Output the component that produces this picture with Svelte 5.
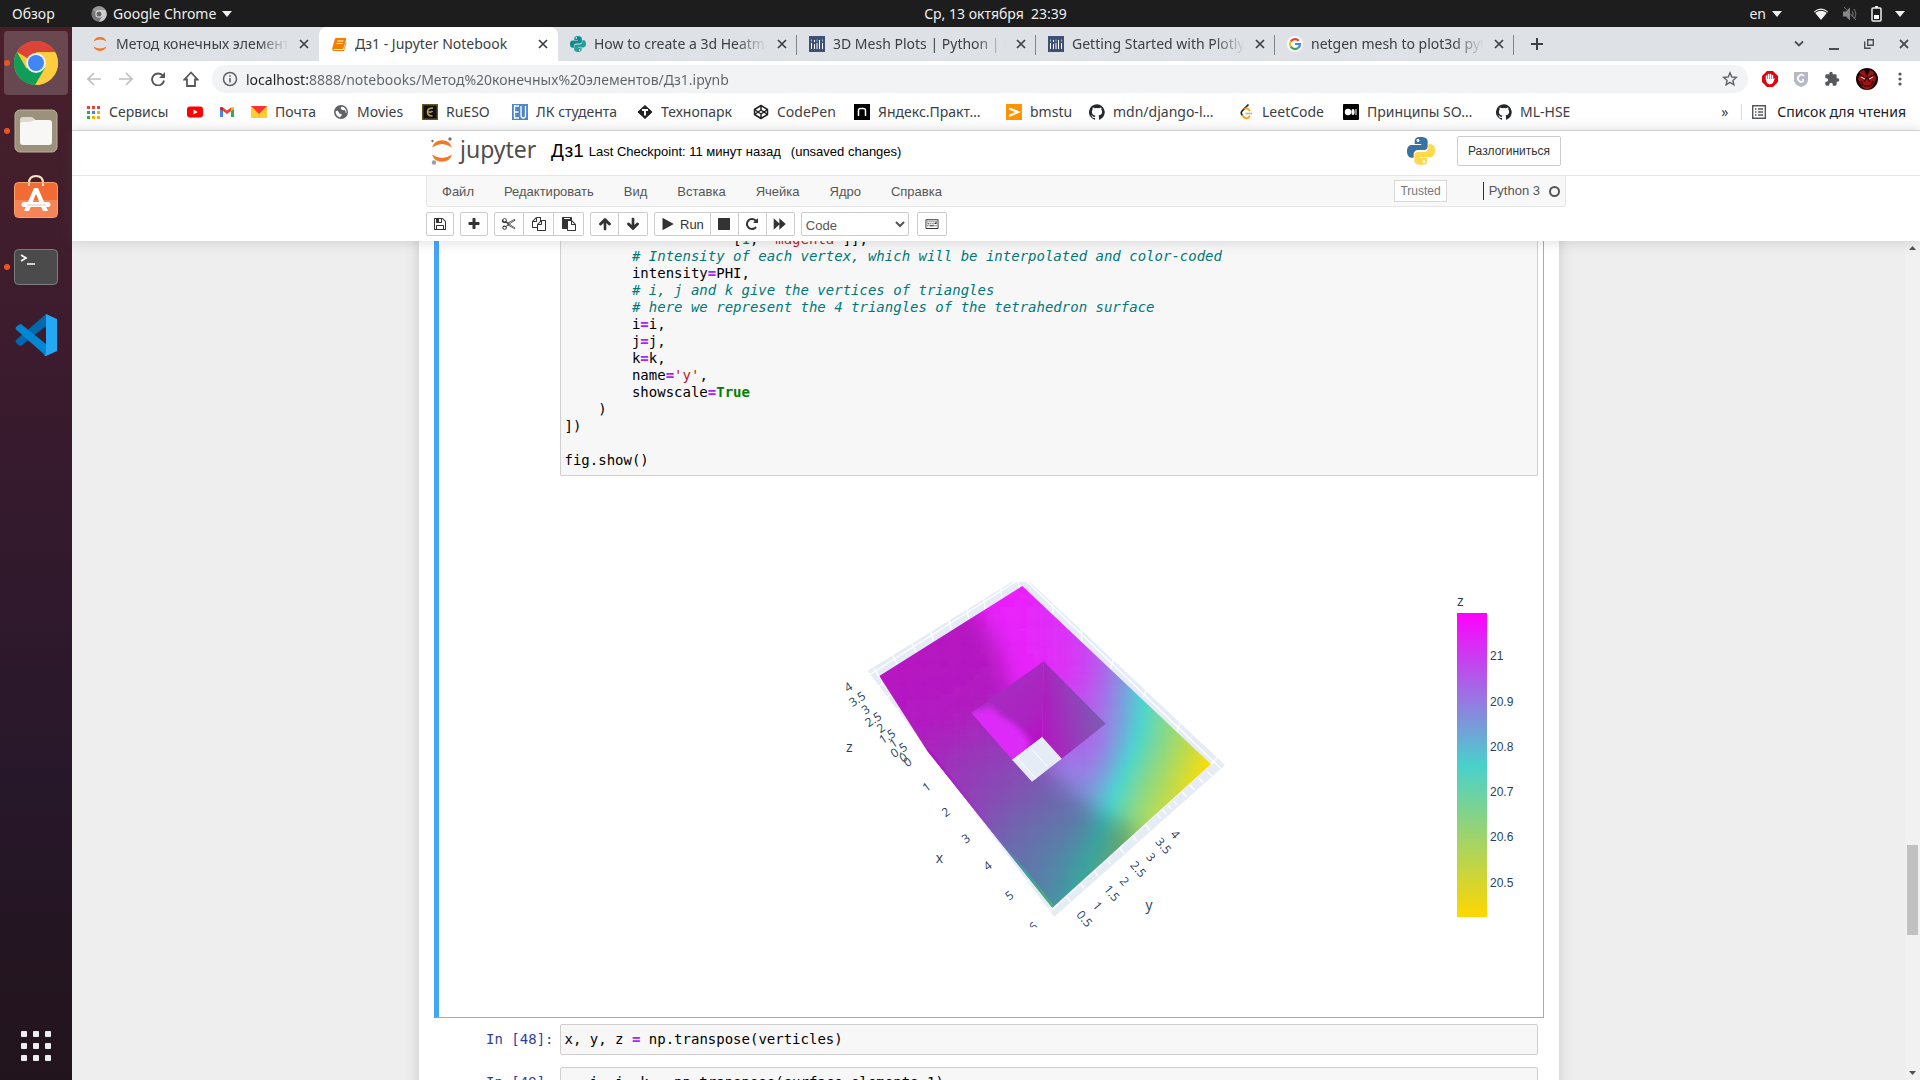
<script>
  const tabs = [
    { icon: 'jupyter', title: 'Метод конечных элементов' },
    { icon: 'book', title: 'Дз1 - Jupyter Notebook', active: true },
    { icon: 'pyteal', title: 'How to create a 3d Heatmap' },
    { icon: 'plotly', title: '3D Mesh Plots | Python | Plotly' },
    { icon: 'plotly', title: 'Getting Started with Plotly in' },
    { icon: 'google', title: 'netgen mesh to plot3d python' },
  ];

  const bookmarks = [
    { icon: 'apps', label: 'Сервисы' },
    { icon: 'youtube', label: '' },
    { icon: 'gmail', label: '' },
    { icon: 'mail', label: 'Почта' },
    { icon: 'globe', label: 'Movies' },
    { icon: 'rueso', label: 'RuESO' },
    { icon: 'eu', label: 'ЛК студента' },
    { icon: 'techno', label: 'Технопарк' },
    { icon: 'codepen', label: 'CodePen' },
    { icon: 'yandex', label: 'Яндекс.Практ…' },
    { icon: 'bmstu', label: 'bmstu' },
    { icon: 'github', label: 'mdn/django-l…' },
    { icon: 'leetcode', label: 'LeetCode' },
    { icon: 'medium', label: 'Принципы SO…' },
    { icon: 'github', label: 'ML-HSE' },
  ];

  const menus = ['Файл', 'Редактировать', 'Вид', 'Вставка', 'Ячейка', 'Ядро', 'Справка'];

  const fa = {
    save: 'M512 1536h768v-384h-768v384zm896 0h128v-896q0-14-10-38.5t-20-34.5l-281-281q-10-10-34-20t-39-10v416q0 40-28 68t-68 28h-576q-40 0-68-28t-28-68v-416h-128v1280h128v-416q0-40 28-68t68-28h832q40 0 68 28t28 68v416zm-384-928v-320q0-13-9.5-22.5t-22.5-9.5h-192q-13 0-22.5 9.5t-9.5 22.5v320q0 13 9.5 22.5t22.5 9.5h192q13 0 22.5-9.5t9.5-22.5zm640 32v928q0 40-28 68t-68 28h-1344q-40 0-68-28t-28-68v-1344q0-40 28-68t68-28h928q40 0 88 20t76 48l280 280q28 28 48 76t20 88z',
    plus: 'M1600 736v192q0 40-28 68t-68 28h-416v416q0 40-28 68t-68 28h-192q-40 0-68-28t-28-68v-416h-416q-40 0-68-28t-28-68v-192q0-40 28-68t68-28h416v-416q0-40 28-68t68-28h192q40 0 68 28t28 68v416h416q40 0 68 28t28 68z',
    cut: 'M330 150a290 270 0 0 1 290 270q0 90-50 150l210 140 740-410q50-25 100 0l100 50q30 25 0 50L1010 896l710 496q30 25 0 50l-100 50q-50 25-100 0l-740-410-210 140q50 60 50 150a290 270 0 1 1-290-270q110 0 180 50l180-120v-180l-180-120q-70 50-180 50a290 270 0 1 1 0-632zm0 120a160 140 0 1 0 0 290 160 140 0 0 0 0-290zm0 970a160 140 0 1 0 0 290 160 140 0 0 0 0-290zM830 800l90 60 670-480-40-20zM830 990l720 440 40-20-640-460z',
    copy: 'M1696 384q40 0 68 28t28 68v1216q0 40-28 68t-68 28h-960q-40 0-68-28t-28-68v-288h-544q-40 0-68-28t-28-68v-672q0-40 20-88t48-76l408-408q28-28 76-48t88-20h416q40 0 68 28t28 68v328q68-40 128-40h416zm-544 213l-299 299h299v-299zm-640-384l-299 299h299v-299zm196 647l316-316v-416h-384v416q0 40-28 68t-68 28h-416v640h512v-256q0-40 20-88t48-76zm956 804v-1152h-384v416q0 40-28 68t-68 28h-416v640h896z',
    paste: 'M768 1664h896v-640h-416q-40 0-68-28t-28-68v-416h-384v1152zm256-1440v-64q0-13-9.5-22.5t-22.5-9.5h-704q-13 0-22.5 9.5t-9.5 22.5v64q0 13 9.5 22.5t22.5 9.5h704q13 0 22.5-9.5t9.5-22.5zm256 672h299l-299-299v299zm512 128v672q0 40-28 68t-68 28h-960q-40 0-68-28t-28-68v-160h-544q-40 0-68-28t-28-68v-1344q0-40 28-68t68-28h1088q40 0 68 28t28 68v328q21 13 36 28l408 408q28 28 48 76t20 88z',
    up: 'M896 130q50 0 90 38l640 640q38 40 38 90t-38 90l-75 76q-40 37-91 37-52 0-90-37l-304-304v824q0 50-38 78t-88 28h-88q-50 0-88-28t-38-78v-824l-304 304q-38 37-90 37t-90-37l-75-76q-38-38-38-90 0-50 38-90l640-640q38-38 90-38z',
    down: 'M896 1662q50 0 90-38l640-640q38-40 38-90t-38-90l-75-76q-40-37-91-37-52 0-90 37l-304 304v-824q0-50-38-78t-88-28h-88q-50 0-88 28t-38 78v824l-304-304q-38-37-90-37t-90 37l-75 76q-38 38-38 90 0 50 38 90l640 640q38 38 90 38z',
    run: 'M1576 927l-1328 738q-23 13-39.500 3t-16.500-36v-1472q0-26 16.500-36t39.500 3l1328 738q23 13 23 31t-23 31z',
    stop: 'M1664 192v1408q0 26-19 45t-45 19h-1408q-26 0-45-19t-19-45v-1408q0-26 19-45t45-19h1408q26 0 45 19t19 45z',
    repeat: 'M1664 256v448q0 26-19 45t-45 19h-448q-42 0-59-40-17-39 14-69l138-138q-148-137-349-137-104 0-198.500 40.500t-163.500 109.500-109.500 163.500-40.500 198.500 40.500 198.500 109.500 163.500 163.500 109.500 198.500 40.500q119 0 225-52t179-147q7-10 23-12 15 0 25 9l137 138q9 8 9.500 20.500t-7.500 22.500q-109 132-264 204.500t-327 72.500q-156 0-298-61t-245-164-164-245-61-298 61-298 164-245 245-164 298-61q147 0 284.500 55.500t244.500 156.500l130-129q29-31 70-14 39 17 39 59z',
    forward: 'M90 150l720 690v-690l820 746-820 746v-690l-720 690z',
    keyboard: 'M60 380q0-100 100-100h1472q100 0 100 100v1040q0 100-100 100h-1472q-100 0-100-100zm120 20v1000h1432v-1000zM300 530h130v130h-130zM560 530h130v130h-130zM820 530h130v130h-130zM1080 530h130v130h-130zM1340 530h150v380h-280v-130h130zM300 790h260v130h-260zM690 790h130v130h-130zM950 790h130v130h-130zM300 1060h130v130h-130zM560 1060h650v130h-650zM1340 1060h150v130h-150z',
  };

  const toolGroups = [
    { kind: 'narrow', buttons: [['save', 'Сохранить']] },
    { kind: 'narrow', buttons: [['plus', 'Вставить ячейку']] },
    { kind: 'wide', buttons: [['cut', 'Вырезать'], ['copy', 'Копировать'], ['paste', 'Вставить']] },
    { kind: 'medium', buttons: [['up', 'Вверх'], ['down', 'Вниз']] },
    { kind: 'narrow', buttons: [['run', 'Run'], ['stop', 'Стоп'], ['repeat', 'Перезапуск'], ['forward', 'Выполнить все']] },
  ];

  // Potential on the mesh surface: [x, y, value], 0 = magenta, 1 = turquoise, 2 = gold
  const samples = [
    [667, 78, 0.08], [600, 180, 0.1], [750, 230, 0.15], [850, 280, 0.25], [900, 380, 0.42],
    [950, 385, 0.62], [1000, 400, 0.86], [1037, 425, 1.02], [1090, 480, 1.3], [1150, 530, 1.55],
    [1233, 613, 2], [1020, 500, 1], [985, 600, 1], [945, 700, 1], [885, 850, 1], [835, 975, 1],
    [900, 560, 0.55], [880, 640, 0.62], [800, 600, 0.5], [780, 650, 0.56], [240, 350, 0.06],
    [400, 260, 0.07], [450, 500, 0.13], [400, 600, 0.2], [500, 560, 0.24], [600, 600, 0.34],
    [640, 680, 0.45], [500, 680, 0.33], [560, 760, 0.43], [700, 700, 0.52], [700, 800, 0.63],
    [620, 830, 0.58], [750, 900, 0.76], [700, 930, 0.72], [850, 780, 0.78], [1020, 700, 1.34],
    [1100, 700, 1.62], [1160, 650, 1.78], [1000, 800, 1.4], [910, 890, 1.14], [757, 1030, 0.86],
    [1060, 580, 1.28], [700, 400, 0.14], [550, 350, 0.09], [800, 420, 0.26],
  ];

  const kernel = (d2) => (d2 === 0 ? 0 : d2 * Math.log(d2));

  // Thin-plate spline through the samples
  function fitSpline(pts) {
    const n = pts.length;
    const size = n + 3;
    const m = Array.from({ length: size }, () => new Array(size + 1).fill(0));
    for (let i = 0; i < n; i++) {
      const [xi, yi, v] = pts[i];
      for (let j = 0; j < n; j++) {
        const dx = (xi - pts[j][0]) / 500;
        const dy = (yi - pts[j][1]) / 500;
        m[i][j] = kernel(dx * dx + dy * dy) + (i === j ? 0.004 : 0);
      }
      const basis = [1, xi / 500, yi / 500];
      basis.forEach((b, k) => {
        m[i][n + k] = b;
        m[n + k][i] = b;
      });
      m[i][size] = v;
    }
    for (let c = 0; c < size; c++) {
      let p = c;
      for (let r = c + 1; r < size; r++) if (Math.abs(m[r][c]) > Math.abs(m[p][c])) p = r;
      [m[c], m[p]] = [m[p], m[c]];
      for (let r = 0; r < size; r++) {
        if (r === c) continue;
        const f = m[r][c] / m[c][c];
        for (let k = c; k <= size; k++) m[r][k] -= f * m[c][k];
      }
    }
    const w = m.map((row, i) => row[size] / row[i]);
    return (x, y) => {
      let s = w[n] + (w[n + 1] * x) / 500 + (w[n + 2] * y) / 500;
      for (let j = 0; j < n; j++) {
        const dx = (x - pts[j][0]) / 500;
        const dy = (y - pts[j][1]) / 500;
        s += w[j] * kernel(dx * dx + dy * dy);
      }
      return s;
    };
  }

  const scale = [[250, 14, 255], [72, 214, 208], [255, 221, 0]];
  function colour(t) {
    const v = Math.max(0, Math.min(1.999, t));
    const a = scale[Math.floor(v)];
    const b = scale[Math.floor(v) + 1];
    const f = v % 1;
    return `rgb(${a.map((c, i) => Math.round(c + (b[i] - c) * f)).join(',')})`;
  }

  const field = fitSpline(samples);
  const step = 20;
  const patches = [];
  for (let y = 20; y < 1110; y += step) {
    for (let x = 180; x < 1300; x += step) {
      if (x + y < 480 || x - y > 800 || x + y > 1980 || y - x > 420) continue;
      patches.push({ x, y, fill: colour(field(x + step / 2, y + step / 2)) });
    }
  }

  const zTicks = [['4', 145, 382], ['3.5', 172, 418], ['3', 197, 449], ['2.5', 220, 479], ['2', 243, 505], ['1.5', 262, 530], ['1', 280, 550], ['0.5', 297, 571], ['0', 310, 593], ['0', 323, 607]];
  const xTicks = [['1', 380, 682], ['2', 438, 757], ['3', 498, 836], ['4', 563, 918], ['5', 628, 1007], ['6', 700, 1100]];
  const yTicks = [['4', 1125, 824], ['3.5', 1090, 858], ['3', 1052, 892], ['2.5', 1014, 928], ['2', 973, 964], ['1.5', 935, 1000], ['1', 892, 1038], ['0.5', 853, 1077]];
  const barTicks = [['21', 656], ['20.9', 702], ['20.8', 747], ['20.7', 792], ['20.6', 837], ['20.5', 883]];
  const gridLines = [
    'M212 342L652 62', 'M222 326L262 388', 'M275 280L292 314', 'M335 250L350 280', 'M391 213L401 243', 'M446 178L454 210', 'M499 145L507 178', 'M551 112L555 148', 'M601 80L606 116', 'M652 60L660 90',
    'M676 60L1262 625', 'M757 132L760 165', 'M845 210L845 245', 'M940 296L932 325', 'M1038 392L1030 410', 'M1140 490L1130 515', 'M1252 592L1232 615',
    'M745 1060L1245 600', 'M797 1005L812 1026', 'M838 966L853 986', 'M880 928L893 948', 'M918 895L932 912', 'M958 862L972 880', 'M998 824L1010 844', 'M1035 790L1050 812', 'M1072 764L1083 776', 'M1088 750L1099 762', 'M1104 736L1115 748', 'M1120 722L1131 734', 'M1146 696L1160 710', 'M1170 675L1184 690', 'M1196 655L1210 668', 'M1222 635L1236 648',
    'M236 380L250 368', 'M262 412L276 402', 'M290 450L304 440', 'M318 492L334 480', 'M350 540L366 530', 'M380 576L394 566', 'M425 648L440 636', 'M484 722L498 710', 'M545 800L558 788', 'M608 882L622 872', 'M675 968L690 956',
    'M740 1052L756 1040',
  ];
</script>

{#snippet gh()}
  <path d="M8 .2a8 8 0 0 0-2.500 15.600c.4.1.5-.2.5-.4v-1.500c-2.200.5-2.700-1-2.700-1-.4-.9-.9-1.200-.9-1.200-.7-.5.1-.5.1-.5.8.1 1.200.8 1.200.8.7 1.300 1.900.9 2.300.7.1-.5.3-.9.5-1.100-1.800-.2-3.600-.9-3.600-4 0-.9.3-1.600.8-2.100-.1-.2-.4-1 .1-2.100 0 0 .7-.2 2.200.8a7.500 7.500 0 0 1 4 0c1.500-1 2.200-.8 2.200-.8.4 1.100.2 1.900.1 2.100.5.6.8 1.300.8 2.100 0 3.100-1.900 3.700-3.600 3.900.3.300.5.8.5 1.500v2.300c0 .2.1.5.5.4A8 8 0 0 0 8 .2z" fill="#24292e" />
{/snippet}

{#snippet snakes(a, b)}
  <path d="M7.900 0C5 0 4.400 1.200 4.400 2.400V4h3.700v.6H2.600C1 4.600 0 6 0 8.200s1 3.600 2.300 3.600h1.500V9.900c0-1.500 1.100-2.500 2.500-2.500h3.500c1.300 0 2-.9 2-2V2.400C11.800 1 10.500 0 7.900 0zM6 1.200a.8.8 0 1 1 0 1.500.8.8 0 0 1 0-1.500z" fill={a} />
  <path d="M8.100 16c2.900 0 3.500-1.200 3.500-2.400V12H7.900v-.6h5.500c1.600 0 2.600-1.400 2.600-3.600s-1-3.600-2.300-3.600h-1.500v1.900c0 1.500-1.100 2.500-2.500 2.500H6.200c-1.300 0-2 .9-2 2v3C4.200 15 5.500 16 8.100 16zM10 14.800a.8.800 0 1 1 0-1.500.8.8 0 0 1 0 1.500z" fill={b} />
{/snippet}

{#snippet icon(name)}
  <svg class="icon" viewBox="0 0 16 16" aria-hidden="true">
    {#if name === 'jupyter'}
      <path d="M1.500 5.500a7 7 0 0 1 13 0Q8 1.500 1.500 5.500zM1.500 10.500a7 7 0 0 0 13 0Q8 14.500 1.500 10.500z" fill="#f37726" />
    {:else if name === 'book'}
      <path d="M5 2h9.500q1 .2.700 1.200l-2.800 9q-.3.800-1.200.8H3.500q-.8 0-.8.500t.8.500h8.700l.5-.6 2-7 .8.300-2.300 7.500q-.3.900-1.200.9H3Q.8 14.600 1.200 12.500l2.500-9Q4.100 2 5 2zm1.500 2.500-.3 1h6l.3-1zM5.800 7l-.3 1h6l.3-1z" fill="#f57c00" fill-rule="evenodd" />
    {:else if name === 'pyteal'}
      {@render snakes('#0b8a8f', '#2a9d9a')}
    {:else if name === 'plotly'}
      <path d="M0 0h16v16H0z" fill="#3f4f75" />
      <path d="M2.500 7v6M5.500 4v2M5.500 8v5M8 7v6M10.500 4v9M13.500 7v6" stroke="#fff" stroke-width="1" />
      <path d="M2.500 3.500v2M8 3.500v2M13.500 3.500v2" stroke="#80cfbe" stroke-width="1" />
    {:else if name === 'google'}
      <circle cx="8" cy="8" r="8" fill="#fff" />
      <g fill="none" stroke-width="2.200">
        <path d="M11.700 4.700A5 5 0 0 0 3.700 5.500" stroke="#ea4335" />
        <path d="M3.700 5.500a5 5 0 0 0 0 5" stroke="#fbbc05" />
        <path d="M3.700 10.500a5 5 0 0 0 7.500 1.400" stroke="#34a853" />
        <path d="M11.200 11.900A5 5 0 0 0 13 8H8" stroke="#4285f4" />
      </g>
    {:else if name === 'apps'}
      <path d="M2 2h3v3H2zM7 2h3v3H7zM12 2h3v3h-3z" fill="#ea4335" />
      <path d="M2 7h3v3H2z" fill="#34a853" /><path d="M7 7h3v3H7z" fill="#4285f4" /><path d="M12 7h3v3h-3z" fill="#f9ab00" />
      <path d="M2 12h3v3H2z" fill="#34a853" /><path d="M7 12h3v3H7zM12 12h3v3h-3z" fill="#f9ab00" />
    {:else if name === 'youtube'}
      <rect y="2.500" width="16" height="11" rx="3" fill="#f00" /><path d="M6.500 5.500v5L10.800 8z" fill="#fff" />
    {:else if name === 'gmail'}
      <path d="M1 4v9h3V7z" fill="#4285f4" /><path d="M12 7v6h3V4z" fill="#34a853" />
      <path d="M1 4.500V4q1-1.700 3-.5l4 3 4-3v3.600L8 10 4 7.100z" fill="#ea4335" /><path d="M12 3.500q2-1.200 3 .5v1l-3 2.200z" fill="#fbbc04" /><path d="M1 4q1-1.700 3-.5v3.600L1 5z" fill="#c5221f" />
    {:else if name === 'mail'}
      <path d="M0 2h16v12H0z" fill="#ffcc32" /><path d="M0 2h16L8 10z" fill="#f33" />
    {:else if name === 'globe'}
      <circle cx="8" cy="8" r="7" fill="#5f6368" /><path d="M3 7q2-1 2.500 1T8 10t-1 3.500Q3 12 2.500 8zM9 2.500q-2 1-1 2.500t3 1 1.500 2.500L13.500 9Q14 4 9 2.500z" fill="#fff" />
    {:else if name === 'rueso'}
      <path d="M0 0h16v16H0z" fill="#111" /><path d="M.7.7h14.600v14.600H.7z" fill="none" stroke="#6b5726" stroke-width="1.400" /><path d="M11 4Q5.500 4 5.500 8t5 4M6 7.800q3 1 4.500-.8" fill="none" stroke="#b39a55" stroke-width="1.700" />
    {:else if name === 'eu'}
      <path d="M0 0h16v16H0z" fill="#4f87c7" /><path d="M7 2H2.500v12H7M2.500 8h4M9 2v9q0 3 2.300 3t2.200-3V2" fill="none" stroke="#fff" stroke-width="1.300" />
    {:else if name === 'techno'}
      <path d="M8 1.500 15 8l-7 6.500L1 8z" fill="#222" stroke="#222" stroke-linejoin="round" /><path d="M5 6h6M8 6v5.500" stroke="#fff" stroke-width="2" />
    {:else if name === 'codepen'}
      <path d="M8 1.500 14.500 5.500v5L8 14.500 1.500 10.500v-5zM8 1.500v4.500M8 10v4.500M1.500 5.500 8 10l6.500-4.500M1.500 10.500 8 6l6.500 4.500" fill="none" stroke="#222" stroke-width="1.500" stroke-linejoin="round" />
    {:else if name === 'yandex'}
      <path d="M0 0h16v16H0z" fill="#000" /><path d="M4.500 12V6.500q0-2 2-2h3q2 0 2 2V12" fill="none" stroke="#fff" stroke-width="1.500" />
    {:else if name === 'bmstu'}
      <path d="M0 0h16v16H0z" fill="#ff9300" /><path d="M3 4.500 12 8l-9 4" fill="none" stroke="#fff" stroke-width="2.200" />
    {:else if name === 'github'}
      {@render gh()}
    {:else if name === 'leetcode'}
      <path d="M10.500.5 4.500 6.500Q2 9 4.500 11.500" fill="none" stroke="#222" stroke-width="1.600" /><path d="M4.500 11.500l2 2q2 1.700 4 0l1.500-1.500M6.500 5l1-.5q1.500-.5 3 .8l1.500 1.500" fill="none" stroke="#ffa116" stroke-width="1.800" /><path d="M7.500 9.500H14" stroke="#b3b3b3" stroke-width="1.600" />
    {:else if name === 'medium'}
      <rect width="16" height="16" rx="1" fill="#000" /><circle cx="5" cy="8" r="3.200" fill="#fff" /><ellipse cx="10" cy="8" rx="1.600" ry="3" fill="#fff" /><path d="M13 5v6" stroke="#fff" stroke-width="1" />
    {/if}
  </svg>
{/snippet}

{#snippet chromeLogo()}
  <circle cx="22" cy="22" r="22" fill="#fbc934" />
  <path d="M22 22 2.900 11A22 22 0 0 1 41.100 11H22z" fill="#db4437" />
  <path d="M2.900 11A22 22 0 0 0 21 44l10-17-9-5-9.500 5.500z" fill="#0f9d58" />
  <path d="M41 11H22v11l9.500 5.500L22 44A22 22 0 0 0 41 11z" fill="#ffcd40" />
  <circle cx="22" cy="22" r="10" fill="#f1f1f1" /><circle cx="22" cy="22" r="8" fill="#4285f4" />
{/snippet}

<div class="desktop">
  <header class="topbar">
    <button class="plain activities">Обзор</button>
    <button class="plain appmenu">
      <svg width="16" height="16" viewBox="0 0 44 44"><circle cx="22" cy="22" r="21" fill="#777" /><path d="M22 22 4 11A21 21 0 0 1 40 11z" fill="#999" /><path d="M40 11H24v11l7 6-9 15A21 21 0 0 0 40 11z" fill="#ccc" /><circle cx="22" cy="22" r="10" fill="#ddd" /><circle cx="22" cy="22" r="7" fill="#666" /></svg>
      <span>Google Chrome</span>
      <svg width="10" height="6" viewBox="0 0 10 6"><path d="M0 0h10L5 6z" fill="#eee" /></svg>
    </button>
    <time>Ср, 13 октября&nbsp; 23:39</time>
    <div class="status">
      <button class="plain lang">en <svg width="10" height="6" viewBox="0 0 10 6"><path d="M0 0h10L5 6z" fill="#eee" /></svg></button>
      <svg width="16" height="14" viewBox="0 0 16 14"><path d="M1 4.500Q8-1.500 15 4.500L8 13z" fill="#f2f2f2" /><path d="M2 5.500q6-4.500 12 0" fill="none" stroke="#1d1d1d" /></svg>
      <svg width="16" height="16" viewBox="0 0 16 16"><path d="M1 5.500h3l4-4v13l-4-4H1z" fill="#888" /><path d="M10 5q2 3 0 6M12 3q3.500 5 0 10" fill="none" stroke="#666" stroke-width="1.300" /><path d="M2 1l12 13" stroke="#777" /></svg>
      <svg width="11" height="16" viewBox="0 0 11 16"><path d="M4 0h3v2H4z" fill="#eee" /><rect x="1" y="2" width="9" height="13" rx="1" fill="none" stroke="#eee" stroke-width="1.500" /><path d="M3 9h5v4H3z" fill="#fff" /></svg>
      <svg width="10" height="6" viewBox="0 0 10 6"><path d="M0 0h10L5 6z" fill="#eee" /></svg>
    </div>
  </header>

  <div class="workspace">
    <nav class="dock" aria-label="Приложения">
      <button class="launcher running focused" aria-label="Google Chrome"><svg width="44" height="44" viewBox="0 0 44 44">{@render chromeLogo()}</svg></button>
      <button class="launcher running" aria-label="Файлы">
        <svg width="44" height="44" viewBox="0 0 44 44"><rect x="1" y="1" width="42" height="42" rx="5" fill="#9c927c" stroke="#bab19c" /><path d="M6 11q0-3 3-3h8q2 0 3 1.500l2 2h13q3 0 3 3V20H6z" fill="#dedacb" /><path d="M6 16q0-3 3-3h6q2 0 3.500-1t3.500-1h13q3 0 3 3v19q0 3-3 3H9q-3 0-3-3z" fill="#f8f7f5" /></svg>
      </button>
      <button class="launcher" aria-label="Ubuntu Software">
        <svg width="44" height="50" viewBox="0 0 44 50"><path d="M15 14V9q0-7 7-7t7 7v5" fill="none" stroke="#fbe3c5" stroke-width="2" /><rect x=".5" y="8.500" width="43" height="35" rx="4" fill="#f26a34" stroke="#f8a36e" /><path d="M1 26h42v14q0 3-3 3H4q-3 0-3-3z" fill="#f58556" /><path d="M15 12V9M29 12V9" stroke="#fbe3c5" stroke-width="2" /><path d="M20 14h4l10 23h-5L22 20l-7 17h-5z" fill="#fff" /><path d="M10 30.500h24" stroke="#fff" stroke-width="5" stroke-linecap="round" /><path d="M13 31h19" stroke="#f9c3a8" /></svg>
      </button>
      <button class="launcher running" aria-label="Терминал">
        <svg width="44" height="36" viewBox="0 0 44 36"><rect x=".5" y=".5" width="43" height="35" rx="4" fill="#4b4b4b" stroke="#7d7d7d" /><path d="M7 6l5 3-5 3M13 15h8" fill="none" stroke="#fff" stroke-width="1.700" /></svg>
      </button>
      <button class="launcher" aria-label="Visual Studio Code">
        <svg width="42" height="42" viewBox="0 0 42 42"><path d="M31 0v12L6 32q-2 0-5-3.500-1-1.500 0-2.500z" fill="#0168ad" /><path d="M31 42V30L6 10Q4 10 1 13q-1 1.500 0 2.500z" fill="#0186d1" /><path d="M31 0 42 5v32l-11 5q-1 0-2-1 2 0 2-2z" fill="#25a8f3" /></svg>
      </button>
      <button class="launcher all" aria-label="Показать приложения">
        <svg width="30" height="30" viewBox="0 0 30 30" fill="#eee">
          {#each [0, 12, 24] as y}{#each [0, 12, 24] as x}<rect {x} {y} width="6" height="6" rx="1" />{/each}{/each}
        </svg>
      </button>
    </nav>

    <main class="browser">
      <div class="tabstrip">
        <div class="tabs">
          {#each tabs as tab}
            <div class="tab" class:active={tab.active}>
              {@render icon(tab.icon)}
              <span class="tab-title">{tab.title}</span>
              <button class="plain close" aria-label="Закрыть"><svg width="10" height="10" viewBox="0 0 10 10"><path d="M1 1l8 8M9 1l-8 8" stroke="#3c4043" stroke-width="1.700" /></svg></button>
            </div>
          {/each}
          <button class="plain newtab" aria-label="Новая вкладка"><svg width="12" height="12" viewBox="0 0 12 12"><path d="M6 0v12M0 6h12" stroke="#3c4043" stroke-width="2" /></svg></button>
        </div>
        <div class="window-controls">
          <svg width="10" height="8" viewBox="0 0 10 8"><path d="M1 1.500l4 4 4-4" fill="none" stroke="#4c5054" stroke-width="1.800" /></svg>
          <svg width="10" height="12" viewBox="0 0 10 12"><path d="M0 11h10" stroke="#4c5054" stroke-width="2" /></svg>
          <svg width="10" height="10" viewBox="0 0 10 10"><path d="M3.700.7h5.600v5.600H3.700zM.7 2.500v6.800h6" fill="none" stroke="#4c5054" stroke-width="1.400" /></svg>
          <svg width="10" height="10" viewBox="0 0 10 10"><path d="M1 1l8 8M9 1l-8 8" stroke="#4c5054" stroke-width="1.800" /></svg>
        </div>
      </div>

      <div class="navbar">
        <div class="navbuttons">
          <button class="plain" aria-label="Назад"><svg width="14" height="14" viewBox="0 0 14 14"><path d="M14 7H1.500M7 1 1 7l6 6" fill="none" stroke="#bdc1c6" stroke-width="1.700" /></svg></button>
          <button class="plain" aria-label="Вперёд"><svg width="14" height="14" viewBox="0 0 14 14"><path d="M0 7h12.500M7 1l6 6-6 6" fill="none" stroke="#bdc1c6" stroke-width="1.700" /></svg></button>
          <button class="plain" aria-label="Обновить"><svg width="14" height="14" viewBox="0 0 14 14"><path d="M12 4A6 6 0 1 0 13 8.500" fill="none" stroke="#54585c" stroke-width="1.900" /><path d="M14 0v6H8z" fill="#54585c" /></svg></button>
          <button class="plain" aria-label="Домой"><svg width="16" height="16" viewBox="0 0 16 16"><path d="M8 1.500 1.500 8.500H4V15h8V8.500h2.500z" fill="none" stroke="#54585c" stroke-width="1.800" /></svg></button>
        </div>
        <div class="omnibox">
          <svg width="16" height="16" viewBox="0 0 16 16"><circle cx="8" cy="8" r="6.500" fill="none" stroke="#5f6368" stroke-width="1.500" /><path d="M8 7v4.500M8 4.300v1.500" stroke="#5f6368" stroke-width="1.600" /></svg>
          <input aria-label="Адрес" value="localhost:8888/notebooks/Метод%20конечных%20элементов/Дз1.ipynb" />
          <button class="plain" aria-label="В закладки"><svg width="16" height="16" viewBox="0 0 16 16"><path d="M8 1.800l1.800 4.200 4.500.4-3.400 3 1 4.400L8 11.400l-3.900 2.400 1-4.400-3.400-3L6.200 6z" fill="none" stroke="#5f6368" stroke-width="1.400" /></svg></button>
        </div>
        <div class="extensions">
          <svg width="16" height="16" viewBox="0 0 16 16"><path d="M5 0h6l5 5v6l-5 5H5l-5-5V5z" fill="#e3000f" /><path d="M4.500 8.500V5M6.500 8V3.500M8.500 8V3.500M10.500 8V4.500" stroke="#fff" stroke-width="1.500" stroke-linecap="round" /><path d="M4 8h7.200L13 7l-2 5q-3 2.500-6 0-1-1.500-1-4z" fill="#fff" /></svg>
          <svg width="14" height="16" viewBox="0 0 14 16"><path d="M0 1h14v8q0 5-7 7-7-2-7-7z" fill="#b3bac5" /><path d="M10 5a3.500 3.500 0 1 0-1 5.500V8" fill="none" stroke="#fff" stroke-width="1.700" /></svg>
          <svg width="16" height="16" viewBox="0 0 24 24"><path d="M20.500 11H19V7a2 2 0 0 0-2-2h-4V3.500a2.500 2.500 0 0 0-5 0V5H4a2 2 0 0 0-2 2v3.800h1.500a2.700 2.700 0 0 1 0 5.400H2V20a2 2 0 0 0 2 2h3.800v-1.500a2.700 2.700 0 0 1 5.400 0V22H17a2 2 0 0 0 2-2v-4h1.500a2.500 2.500 0 0 0 0-5z" fill="#54585c" /></svg>
          <svg width="22" height="22" viewBox="0 0 22 22"><circle cx="11" cy="11" r="11" fill="#1b0606" /><path d="M4 4l4-2 3 6 3-6 4 2 2 7-4 8-5 3-5-3-4-8z" fill="#a11313" /><path d="M3 6l6 4M19 6l-6 4M8 14l3-5 3 5M8 18h6M5 13l2 5M17 13l-2 5" stroke="#1b0606" stroke-width="1.200" fill="none" /><path d="M5 9l4 2M17 9l-4 2" stroke="#eee" /></svg>
          <svg class="dots" width="4" height="16" viewBox="0 0 4 16" fill="#54585c"><circle cx="2" cy="3" r="1.600" /><circle cx="2" cy="8" r="1.600" /><circle cx="2" cy="13" r="1.600" /></svg>
        </div>
      </div>

      <nav class="bookmarks" aria-label="Закладки">
        <div class="bookmark-list">
          {#each bookmarks as b}
            <a href="#bookmark" aria-label={b.label || b.icon}>{@render icon(b.icon)}{#if b.label}<span>{b.label}</span>{/if}</a>
          {/each}
        </div>
        <span class="more">»</span>
        <a class="reading" href="#reading">
          <svg width="14" height="14" viewBox="0 0 14 14"><path d="M.7.7h12.600v12.600H.7z" fill="none" stroke="#54585c" stroke-width="1.400" /><path d="M3 4h1.500M6 4h5M3 7h1.500M6 7h5M3 10h1.500M6 10h5" stroke="#54585c" stroke-width="1.400" /></svg>
          <span>Список для чтения</span>
        </a>
      </nav>

      <section class="jheader">
        <div class="container titlebar">
          <a class="logo" href="#tree" aria-label="jupyter">
            <svg width="22" height="28" viewBox="0 0 22 28"><path d="M1 10.500a10.500 10.500 0 0 1 20 0Q11 3.500 1 10.500zM1 17.500a10.500 10.500 0 0 0 20 0Q11 24.500 1 17.500z" fill="#f37726" /><circle cx="1.500" cy="4" r="1.200" fill="#767677" /><circle cx="19" cy="2" r="1.700" fill="#767677" /><circle cx="3" cy="25.500" r="2.200" fill="#9e9e9e" /></svg>
            <span>jupyter</span>
          </a>
          <h1>Дз1</h1>
          <span class="checkpoint">Last Checkpoint: 11 минут назад</span>
          <span class="autosave">(unsaved changes)</span>
          <svg class="python" width="28" height="28" viewBox="0 0 16 16">{@render snakes('#3872a3', '#ffd94a')}</svg>
          <button class="logout">Разлогиниться</button>
        </div>
        <div class="container menubar">
          {#each menus as m}<button class="plain">{m}</button>{/each}
          <span class="trusted">Trusted</span>
          <span class="kernel">Python 3 <i></i></span>
        </div>
        <div class="container toolbar">
          {#each toolGroups as group}
            <div class="group {group.kind}">
              {#each group.buttons as [name, label]}
                <button aria-label={label}><svg width="14" height="14" viewBox="0 0 1792 1792"><path d={fa[name]} fill="#333" fill-rule="evenodd" /></svg>{#if name === 'run'}<span>Run</span>{/if}</button>
              {/each}
            </div>
          {/each}
          <select aria-label="Тип ячейки"><option>Code</option><option>Markdown</option></select>
          <div class="group wide"><button aria-label="Палитра команд"><svg width="16" height="14" viewBox="0 0 1792 1792"><path d={fa.keyboard} fill="#333" fill-rule="evenodd" /></svg></button></div>
        </div>
      </section>

      <div class="site">
        <div class="scrollarea">
          <div class="notebook">
            <article class="cell selected">
              <div class="row">
                <div class="prompt"></div>
                <pre class="input">{'                    '}[<b class="num">1</b>, <span class="str">"magenta"</span>]],
        <em># Intensity of each vertex, which will be interpolated and color-coded</em>
        intensity<b class="op">=</b>PHI,
        <em># i, j and k give the vertices of triangles</em>
        <em># here we represent the 4 triangles of the tetrahedron surface</em>
        i<b class="op">=</b>i,
        j<b class="op">=</b>j,
        k<b class="op">=</b>k,
        name<b class="op">=</b><span class="str">'y'</span>,
        showscale<b class="op">=</b><b class="kw">True</b>
    )
])

fig.show()</pre>
              </div>
              <div class="row output">
                <div class="prompt"></div>
                <svg class="plot" viewBox="560 476 978 541" role="img" aria-label="3D mesh">
                  <defs>
                    <clipPath id="scene"><rect x="0" y="66" width="1380" height="1036" /></clipPath>
                    <clipPath id="face"><path d="M667 78L1233 613L757 1043L380 570L238 348z" /></clipPath>
                    <clipPath id="leftwall"><path d="M514 458L731 304L727 532L637 600z" /></clipPath>
                    <filter id="soft" x="-10%" y="-10%" width="120%" height="120%"><feGaussianBlur stdDeviation="13" /></filter>
                    <filter id="shade" x="-20%" y="-20%" width="140%" height="140%"><feGaussianBlur stdDeviation="32" /></filter>
                    <filter id="glow" x="-30%" y="-30%" width="160%" height="160%"><feGaussianBlur stdDeviation="9" /></filter>
                    <linearGradient id="rightwall" gradientUnits="userSpaceOnUse" x1="715" y1="520" x2="910" y2="490">
                      <stop offset="0" stop-color="#b811c5" /><stop offset=".25" stop-color="#a626be" /><stop offset=".6" stop-color="#9240ba" /><stop offset="1" stop-color="#7a5cb2" />
                    </linearGradient>
                    <linearGradient id="backwall" gradientUnits="userSpaceOnUse" x1="620" y1="400" x2="730" y2="520">
                      <stop offset="0" stop-color="#a829c1" /><stop offset=".6" stop-color="#ab22c0" /><stop offset="1" stop-color="#b811c5" />
                    </linearGradient>
                    <linearGradient id="sidewall" gradientUnits="userSpaceOnUse" x1="380" y1="570" x2="757" y2="1043">
                      <stop offset="0" stop-color="#b310c8" /><stop offset=".4" stop-color="#9a3abf" /><stop offset=".62" stop-color="#6a6db5" /><stop offset=".78" stop-color="#36a3a0" /><stop offset="1" stop-color="#52ad70" />
                    </linearGradient>
                    <linearGradient id="bar" x1="0" y1="0" x2="0" y2="1">
                      <stop offset="0" stop-color="#f0f" /><stop offset=".5" stop-color="#48d1cc" /><stop offset="1" stop-color="#ffd700" />
                    </linearGradient>
                  </defs>
                  <g transform="translate(800 560) scale(.33333)">
                    <g clip-path="url(#scene)">
                      <path d="M635 66L690 66L1275 615L763 1071L203 332z" fill="#e5ecf6" />
                      <path d={gridLines.join('')} stroke="#fff" stroke-width="4" fill="none" />
                      <g clip-path="url(#face)">
                        <g filter="url(#soft)">
                          {#each patches as p}<rect x={p.x} y={p.y} width="21" height="21" fill={p.fill} />{/each}
                        </g>
                        <path d="M0 0L420 0L535 160L600 270L640 420L700 580L790 670L880 745L1010 810L1020 900L800 1250L0 1250z" fill="#000" opacity=".23" filter="url(#shade)" />
                        <path d="M380 570L757 1043L610 868L500 722z" fill="url(#sidewall)" stroke="url(#sidewall)" stroke-width="16" />
                      </g>
                      <path d="M731 304L917 491L785 596L727 532z" fill="url(#rightwall)" />
                      <path d="M514 458L731 304L727 532L637 600z" fill="url(#backwall)" />
                      <g clip-path="url(#leftwall)"><path d="M490 458L575 440Q590 462 625 480Q670 510 690 545L690 570L637 620z" fill="#dd2cf8" filter="url(#glow)" /></g>
                      <path d="M727 532L785 596L696 665L637 600z" fill="#e5ecf6" />
                      <path d="M652 594L708 656M694 566L743 620M637 600L727 532" stroke="#fff" stroke-width="3" />
                      <g class="ticks">
                        {#each zTicks as [t, x, y]}<text transform="translate({x} {y}) rotate(-33)" dy="12">{t}</text>{/each}
                        {#each xTicks as [t, x, y]}<text transform="translate({x} {y}) rotate(-36)" dy="12">{t}</text>{/each}
                        {#each yTicks as [t, x, y]}<text transform="translate({x} {y}) rotate(50)" dy="12">{t}</text>{/each}
                      </g>
                      <g class="axis"><text x="148" y="577">z</text><text x="418" y="908">x</text><text x="1047" y="1050">y</text></g>
                    </g>
                  </g>
                  <rect x="1457" y="613" width="30" height="304" fill="url(#bar)" />
                  <text class="bar-title" x="1457" y="606">z</text>
                  {#each barTicks as [t, y]}<text class="bar-tick" x="1490" y={y + 4}>{t}</text>{/each}
                </svg>
              </div>
            </article>
            <article class="cell">
              <div class="row"><div class="prompt">In [48]:</div><pre class="input">x, y, z <b class="op">=</b> np.transpose(verticles)</pre></div>
            </article>
            <article class="cell">
              <div class="row"><div class="prompt">In [49]:</div><pre class="input">_, i, j, k <b class="op">=</b> np.transpose(surface_elements_1)</pre></div>
            </article>
          </div>
        </div>
        <div class="scrollbar">
          <svg width="7" height="4" viewBox="0 0 7 4"><path d="M0 4h7L3.500 0z" fill="#505050" /></svg>
          <div class="thumb"></div>
          <svg width="7" height="4" viewBox="0 0 7 4"><path d="M0 0h7L3.500 4z" fill="#505050" /></svg>
        </div>
      </div>
    </main>
  </div>
</div>

<style>
  :global(body) { margin: 0; }
  .desktop { height: 100vh; display: flex; flex-direction: column; overflow: hidden; font-family: "Noto Sans", "Open Sans", sans-serif; font-size: 14px; color: #3c4043; }
  .desktop *, .desktop *::before { box-sizing: border-box; }
  svg { display: block; flex: none; }
  a { color: inherit; text-decoration: none; }
  .plain { border: 0; background: none; padding: 0; margin: 0; font: inherit; color: inherit; display: flex; align-items: center; justify-content: center; }
  .icon { width: 16px; height: 16px; }

  .topbar { height: 27px; flex: none; background: #1d1d1d; color: #eee; display: grid; grid-template-columns: 1fr auto 1fr; grid-template-areas: "left time right"; align-items: center; padding: 0 15px 0 12px; }
  .activities { grid-area: left; justify-self: start; }
  .appmenu { grid-area: left; justify-self: start; margin-left: 79px; gap: 6px; }
  time { grid-area: time; margin-left: 74px; }
  .status { grid-area: right; justify-self: end; display: flex; align-items: center; gap: 13px; }
  .lang { gap: 6px; margin-right: 18px; }

  .workspace { flex: 1; min-height: 0; display: flex; }
  .dock { width: 72px; flex: none; background: linear-gradient(#49202a, #3a1b2e 34%, #27172a 72%, #22141c); display: flex; flex-direction: column; align-items: center; gap: 4px; padding: 4px 0 2px; }
  .launcher { width: 64px; height: 64px; border: 0; border-radius: 4px; background: none; padding: 0; display: flex; align-items: center; justify-content: center; position: relative; }
  .launcher.focused { background: rgba(255, 255, 255, .18); }
  .launcher.running::before { content: ""; position: absolute; left: 0; top: 29px; width: 6px; height: 6px; border-radius: 50%; background: #e95420; }
  .launcher.all { margin-top: auto; }

  .browser { flex: 1; min-width: 0; display: flex; flex-direction: column; background: #fff; }
  .tabstrip { height: 34px; flex: none; background: #dee1e6; display: flex; justify-content: space-between; padding: 0 11px 0 8px; }
  .tabs { display: flex; }
  .tab { width: 239px; display: flex; align-items: center; gap: 8px; padding: 0 8px 1px 12px; position: relative; }
  .tab-title { flex: 1; min-width: 0; overflow: hidden; white-space: nowrap; mask-image: linear-gradient(90deg, #000 82%, transparent); }
  .tab.active .tab-title { mask-image: none; }
  .tab.active { background: #fff; border-radius: 8px 8px 0 0; }
  .tab:nth-child(n + 3)::before { content: ""; position: absolute; right: 0; top: 8px; width: 1px; height: 20px; background: #80868b; }
  .close { width: 14px; height: 16px; }
  .newtab { width: 46px; }
  .window-controls { display: flex; align-items: center; gap: 25px; }

  .navbar { height: 36px; flex: none; display: flex; align-items: center; padding: 0 18px 0 15px; }
  .navbuttons { display: flex; gap: 18px; width: 125px; }
  .omnibox { flex: 1; height: 28px; border-radius: 14px; background: #f1f3f4; display: flex; align-items: center; gap: 8px; padding: 0 10px; }
  .omnibox input { flex: 1; min-width: 0; border: 0; outline: 0; padding: 0; font: inherit; color: transparent; background: linear-gradient(90deg, #202124 62px, #5f6368 62px); background-clip: text; }
  .extensions { display: flex; align-items: center; gap: 16px; padding-left: 14px; }
  .dots { margin-left: 4px; }

  .bookmarks { height: 34px; flex: none; display: flex; align-items: center; border-bottom: 1px solid #dadce0; padding: 0 14px 4px 13px; }
  .bookmarks a { display: flex; align-items: center; gap: 8px; white-space: nowrap; }
  .bookmark-list { flex: 1; display: grid; grid-template-columns: 102px 32px 32px 82px 89px 90px 125px 116px 101px 152px 83px 149px 105px 153px 90px; align-items: center; }
  .more { width: 20px; }
  .bookmarks .reading { border-left: 1px solid #dadce0; padding-left: 10px; color: #202124; height: 16px; gap: 11px; }

  .jheader { flex: none; font: 13px/19px "Liberation Sans", Arial, sans-serif; color: #000; box-shadow: 0 0 12px 1px rgba(87, 87, 87, .2); z-index: 1; background: linear-gradient(#fff 44px, #e7e7e7 44px, #e7e7e7 45px, #fff 45px); }
  .container { width: 1140px; max-width: 100%; margin: 0 auto; display: flex; }
  .titlebar { height: 44px; align-items: center; padding: 0 5px 4px; }
  .logo { display: flex; align-items: center; gap: 7px; width: 120px; font: 23px/26px "Noto Sans", sans-serif; color: #4e4e4e; }
  .logo span { padding-bottom: 4px; }
  h1 { font-size: 19px; font-weight: 400; margin: 0 5px 2px 0; }
  .checkpoint { padding-top: 0; }
  .autosave { padding-left: 10px; }
  .python { margin-left: auto; }
  .logout { margin-left: 22px; height: 30px; padding: 0 10px; font: 12px "Liberation Sans", sans-serif; color: #333; background: #fff; border: 1px solid #ccc; border-radius: 2px; }
  .menubar { height: 32px; background: #f8f8f8; border: 1px solid #e7e7e7; border-radius: 0 0 2px 2px; align-items: center; color: #555; }
  .menubar button { padding: 0 15px; }
  .trusted { margin-left: auto; border: 1px solid #d8d8d8; color: #777; background: #fff; height: 22px; padding: 0 5px; font-size: 12px; line-height: 20px; }
  .kernel { margin-left: 36px; border-left: 1px solid #333; padding: 0 5px; display: flex; align-items: center; line-height: 18px; }
  .kernel i { width: 11px; height: 11px; border: 2px solid #555; border-radius: 50%; margin-left: 9px; }
  .toolbar { height: 34px; padding: 5px 0; gap: 6px; }
  .group { display: flex; }
  .group button { height: 24px; min-width: 28px; padding: 0 6px; border: 1px solid #ccc; background: #fff; display: flex; align-items: center; justify-content: center; gap: 5px; font: 13px "Liberation Sans", sans-serif; color: #333; }
  .group.medium button { min-width: 29px; }
  .group.wide button { min-width: 30px; }
  .group button + button { border-left: 0; }
  .group button:first-child { border-radius: 2px 0 0 2px; }
  .group button:last-child { border-radius: 0 2px 2px 0; }
  .group button:only-child { border-radius: 2px; }
  .toolbar select { width: 108px; height: 24px; margin-right: 2px; border: 1px solid #ccc; border-radius: 2px; background: #fff; color: #555; font: 13px "Liberation Sans", sans-serif; padding: 2px 0 0; }

  .site { flex: 1; min-height: 0; display: flex; background: #eee; overflow: hidden; }
  .scrollarea { flex: 1; min-width: 0; overflow: hidden; }
  .notebook { width: 1140px; max-width: 100%; margin: -10px auto 0; padding: 0 15px; background: #fff; box-shadow: 0 0 12px 1px rgba(87, 87, 87, .2); min-height: calc(100% + 10px); }
  .cell { border: 1px solid transparent; padding: 5px; font: 14px/17px "DejaVu Sans Mono", monospace; color: #000; }
  .cell.selected { border-color: #ababab; border-top: 0; border-left: 5px solid #42a5f5; padding: 0 5px 0 1px; }
  .row { display: flex; }
  .prompt { width: 120px; flex: none; text-align: right; padding: 7px 6px 0 0; color: #303f9f; }
  .input { flex: 1; min-width: 0; margin: 0; border: 1px solid #cfcfcf; border-radius: 2px; background: #f7f7f7; padding: 6px 4px; font: inherit; overflow: hidden; }
  .cell.selected .input { border-top: 0; padding-top: 0; }
  em { color: #007979; }
  .op { color: #aa22ff; }
  .kw { color: #008000; }
  .num { color: #080; font-weight: 400; }
  .str { color: #ba2121; }
  .plot { flex: 1; min-width: 0; height: 541px; }
  .ticks text { font: 36px "Open Sans", sans-serif; fill: #2a3f5f; text-anchor: middle; }
  .axis text { font: 42px "Open Sans", sans-serif; fill: #2a3f5f; text-anchor: middle; }
  .bar-title { font: 14px "Open Sans", sans-serif; fill: #2a3f5f; }
  .bar-tick { font: 12px "Liberation Sans", sans-serif; fill: #2a3f5f; }
  .scrollbar { width: 15px; flex: none; background: #f1f1f1; display: grid; grid-template-rows: 14px 590fr 90px 131fr 14px; justify-items: center; align-items: center; }
  .thumb { grid-row: 3; width: 11px; height: 90px; background: #c1c1c1; }
  .scrollbar svg:last-child { grid-row: 5; }
</style>
